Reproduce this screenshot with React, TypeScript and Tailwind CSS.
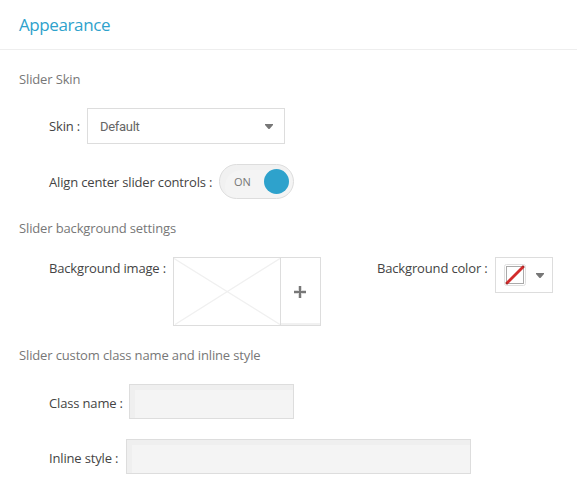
import type { ReactNode } from "react";

function Heading({ children }: { children: ReactNode }) {
  return <h2 className="h-5 text-[13px] leading-5 tracking-[-0.14px] text-[#777777]">{children}</h2>;
}

function Label({ children, className }: { children: ReactNode; className: string }) {
  return (
    <label className={`shrink-0 whitespace-nowrap text-[13px] leading-5 tracking-[-0.16px] text-[#444444] ${className}`}>
      {children}
    </label>
  );
}

function Caret() {
  return (
    <svg width="8" height="5" viewBox="0 0 8 5" className="mt-px shrink-0" fill="#777777">
      <path d="M0 0H8V1L4.5 5H3.5L0 1Z" />
    </svg>
  );
}

const field =
  "border border-[#dddddd] bg-[#f4f4f4] shadow-[inset_5px_5px_0_#efefef] outline-none";

export default function App() {
  return (
    <main className="h-[494px] w-[577px] overflow-hidden bg-white font-['Open_Sans',sans-serif]">
      <header className="h-[50px] border-b border-[#eeeeee] pl-[19px]">
        <h1 className="text-[17px] leading-[50px] tracking-[-0.4px] text-[#2ea2cc]">Appearance</h1>
      </header>

      <section className="pt-[19px] pl-[19px]">
        <Heading>Slider Skin</Heading>
        <div className="mt-[19px] flex h-9 items-center pl-[30px]">
          <Label className="w-[38px]">Skin :</Label>
          <button className="flex h-9 w-[198px] items-center justify-between border border-[#dddddd] bg-white pr-[11px] pl-3 font-['Roboto',sans-serif] text-[13px] tracking-[-0.3px] text-[#666666]">
            <span className="pt-px">Default</span>
            <Caret />
          </button>
        </div>
        <div className="mt-5 flex h-[35px] items-center pl-[30px]">
          <Label className="w-[170px]">Align center slider controls :</Label>
          <button className="flex h-[35px] w-[75px] items-center justify-between rounded-full border border-[#dddddd] bg-[#f4f4f4] pt-px pr-1 pl-[14px] text-[11px] text-[#777777] shadow-[inset_5px_5px_0_#f1f1f1]">
            ON
            <span className="mb-px size-[25px] rounded-full bg-[#2ea2cc]" />
          </button>
        </div>
      </section>

      <section className="pt-[19px] pl-[19px]">
        <Heading>Slider background settings</Heading>
        <div className="mt-[19px] flex h-[69px] items-start pl-[30px]">
          <Label className="w-[124px] pt-px">Background image :</Label>
          <div className="flex h-[69px] w-[148px] border border-[#dddddd]">
            <svg width="106" height="67" viewBox="0 0 106 67" className="shrink-0" stroke="#f0f0f0" strokeWidth="1.3" fill="none">
              <path d="M0 0.5L106 66.5M1 66.5L106 0.5" />
            </svg>
            <button className="flex flex-1 items-center justify-center border-l border-[#dddddd] pt-px pr-px shadow-[inset_0_-2px_0_#f1f1f1]">
              <svg width="12" height="12" viewBox="0 0 12 12">
                <path d="M4 0H8V4H12V8H8V12H4V8H0V4H4Z" fill="#dddddd" />
                <path d="M5 0H7V5H12V7H7V12H5V7H0V5H5Z" fill="#777777" />
              </svg>
            </button>
          </div>
          <Label className="ml-14 w-[118px] pt-px">Background color :</Label>
          <button className="flex h-9 w-[58px] items-center justify-between border border-[#dddddd] bg-white pr-2 pl-2">
            <svg width="22" height="22" viewBox="0 0 22 22" fill="none">
              <rect x="0.5" y="0.5" width="21" height="21" rx="2" stroke="#e0e0e0" />
              <rect x="2.5" y="2.5" width="17" height="17" stroke="#aaaaaa" />
              <path d="M2 18L18 2H20V4L4 20H2Z" fill="#d22b2b" />
              <path d="M2 18V20H4M18 2H20V4" stroke="#8b2020" strokeWidth="0.7" />
            </svg>
            <Caret />
          </button>
        </div>
      </section>

      <section className="pt-[19px] pl-[19px]">
        <Heading>Slider custom class name and inline style</Heading>
        <div className="mt-[19px] flex h-[35px] items-center pl-[30px]">
          <Label className="w-20 pt-[2px]">Class name :</Label>
          <input className={`h-[35px] w-[165px] ${field}`} />
        </div>
        <div className="mt-5 flex h-[35px] items-center pl-[30px]">
          <Label className="w-[77px] pt-[2px]">Inline style :</Label>
          <input className={`h-[35px] w-[345px] ${field}`} />
        </div>
      </section>
    </main>
  );
}
